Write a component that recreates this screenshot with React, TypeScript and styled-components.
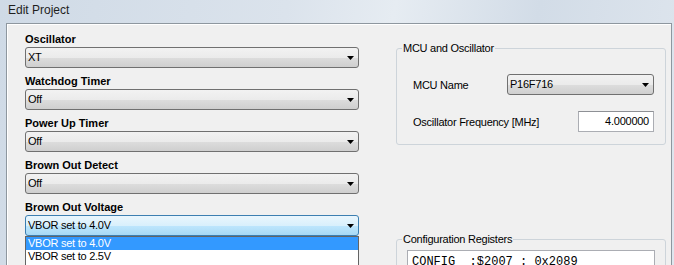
import React from "react";
import styled, { createGlobalStyle, css } from "styled-components";

const GlobalStyle = createGlobalStyle`
   html, body {
      margin: 0;
      padding: 0;
      background: #d3dde8;
   }
   body {
      font-family: "Liberation Sans", Arial, sans-serif;
      font-size: 11px;
      color: #000;
   }
`;

const Window = styled.div`
   width: 674px;
   height: 265px;
   overflow: hidden;
   display: flex;
   flex-direction: column;
   background: linear-gradient(100deg, #cfdae6 0%, #dbe3ec 40%, #e6ecf2 55%, #d2dce7 75%, #dfe6ee 100%);
`;

const TitleBar = styled.div`
   height: 23px;
   flex: none;
   padding: 3px 0 0 8px;
   box-sizing: border-box;

   .title {
      font-size: 12px;
      line-height: 15px;
      color: #1e1e1e;
   }
`;

const Frame = styled.div`
   flex: 1;
   display: flex;
   padding: 0 2px 0 6px;
   min-height: 0;
`;

const Client = styled.div`
   flex: 1;
   display: flex;
   gap: 37px;
   padding: 2px 5px 0 18px;
   background: #f0f0f0;
   border: 1px solid #8e979f;
   border-bottom: none;
   box-shadow: inset 1px 1px 0 #ffffff;
`;

const LeftColumn = styled.div`
   width: 334px;
   flex: none;
   display: flex;
   flex-direction: column;
`;

const RightColumn = styled.div`
   width: 270px;
   flex: none;
   display: flex;
   flex-direction: column;
`;

const Field = styled.div`
   position: relative;
   display: flex;
   flex-direction: column;
`;

const FieldLabel = styled.div`
   padding-top: 5px;
   height: 16px;
   line-height: 16px;
   font-weight: bold;
   font-size: 11px;
`;

const Combo = styled.div<{ $focused?: boolean; $width?: number }>`
   height: 21px;
   box-sizing: border-box;
   width: ${(p) => (p.$width ? `${p.$width}px` : "auto")};
   display: flex;
   align-items: center;
   justify-content: space-between;
   padding: 0 4px 0 2px;
   border: 1px solid #707070;
   border-radius: 3px;
   background: linear-gradient(#f2f2f2 0%, #ebebeb 50%, #dddddd 51%, #cfcfcf 100%);
   letter-spacing: -0.25px;
   line-height: 19px;

   ${(p) =>
      p.$focused &&
      css`
         border-color: #3c7fb1;
         background: linear-gradient(#eaf6fd 0%, #d9f0fc 50%, #bee6fd 51%, #a7d9f5 100%);
      `}
`;

const Arrow = () => (
   <svg width="7" height="4" viewBox="0 0 7 4">
      <polygon points="0,0 7,0 3.5,4" fill="#000" />
   </svg>
);

const DropList = styled.div`
   position: absolute;
   top: 100%;
   left: 0;
   right: 0;
   z-index: 2;
   background: #fff;
   border: 1px solid #646464;
   letter-spacing: -0.25px;
`;

const DropItem = styled.div<{ $selected?: boolean }>`
   height: 13px;
   line-height: 13px;
   padding-left: 2px;
   background: ${(p) => (p.$selected ? "#3399ff" : "#fff")};
   color: ${(p) => (p.$selected ? "#fff" : "#000")};
`;

const Group = styled.fieldset<{ $top: number }>`
   margin: ${(p) => p.$top}px 0 0 0;
   padding: 0;
   border: 1px solid #cdd4da;
   border-radius: 3px;
   min-width: 0;

   legend {
      margin-left: 5px;
      padding: 0 1px;
      line-height: 14px;
      letter-spacing: -0.25px;
   }
`;

const GroupBody = styled.div<{ $pad: string }>`
   padding: ${(p) => p.$pad};
   display: flex;
   flex-direction: column;
   gap: 16px;
`;

const Row = styled.div`
   height: 21px;
   display: flex;
   align-items: center;
   justify-content: space-between;
   letter-spacing: -0.25px;
`;

const NumberBox = styled.div`
   width: 76px;
   height: 21px;
   box-sizing: border-box;
   border: 1px solid #abadb3;
   border-top-color: #8e9095;
   background: #fff;
   text-align: right;
   padding-right: 4px;
   line-height: 19px;
   letter-spacing: -0.25px;
`;

const RegisterBox = styled.div`
   height: 60px;
   border: 1px solid #abadb3;
   background: #fff;
   padding: 4px 4px 0;
   font-family: "Liberation Mono", "Courier New", monospace;
   font-size: 12px;
   line-height: 14px;
   white-space: pre;
`;

const fields = [
   { label: "Oscillator", value: "XT" },
   { label: "Watchdog Timer", value: "Off" },
   { label: "Power Up Timer", value: "Off" },
   { label: "Brown Out Detect", value: "Off" },
   { label: "Brown Out Voltage", value: "VBOR set to 4.0V", open: true },
];

const voltageOptions = ["VBOR set to 4.0V", "VBOR set to 2.5V", "Off"];

const App: React.FC = () => {
   return (
      <>
         <GlobalStyle />
         <Window>
            <TitleBar>
               <span className="title">Edit Project</span>
            </TitleBar>
            <Frame>
               <Client>
                  <LeftColumn>
                     {fields.map((f) => (
                        <Field key={f.label}>
                           <FieldLabel>{f.label}</FieldLabel>
                           <Combo $focused={f.open}>
                              <span>{f.value}</span>
                              <Arrow />
                           </Combo>
                           {f.open && (
                              <DropList>
                                 {voltageOptions.map((o, i) => (
                                    <DropItem key={o} $selected={i === 0}>
                                       {o}
                                    </DropItem>
                                 ))}
                              </DropList>
                           )}
                        </Field>
                     ))}
                  </LeftColumn>
                  <RightColumn>
                     <Group $top={15}>
                        <legend>MCU and Oscillator</legend>
                        <GroupBody $pad="19px 11px 12px 16px">
                           <Row>
                              <span>MCU Name</span>
                              <Combo $width={147}>
                                 <span>P16F716</span>
                                 <Arrow />
                              </Combo>
                           </Row>
                           <Row>
                              <span>Oscillator Frequency [MHz]</span>
                              <NumberBox>4.000000</NumberBox>
                           </Row>
                        </GroupBody>
                     </Group>
                     <Group $top={87}>
                        <legend>Configuration Registers</legend>
                        <GroupBody $pad="4px 10px 10px 10px">
                           <RegisterBox>{"CONFIG  :$2007 : 0x2089"}</RegisterBox>
                        </GroupBody>
                     </Group>
                  </RightColumn>
               </Client>
            </Frame>
         </Window>
      </>
   );
};

export default App;
